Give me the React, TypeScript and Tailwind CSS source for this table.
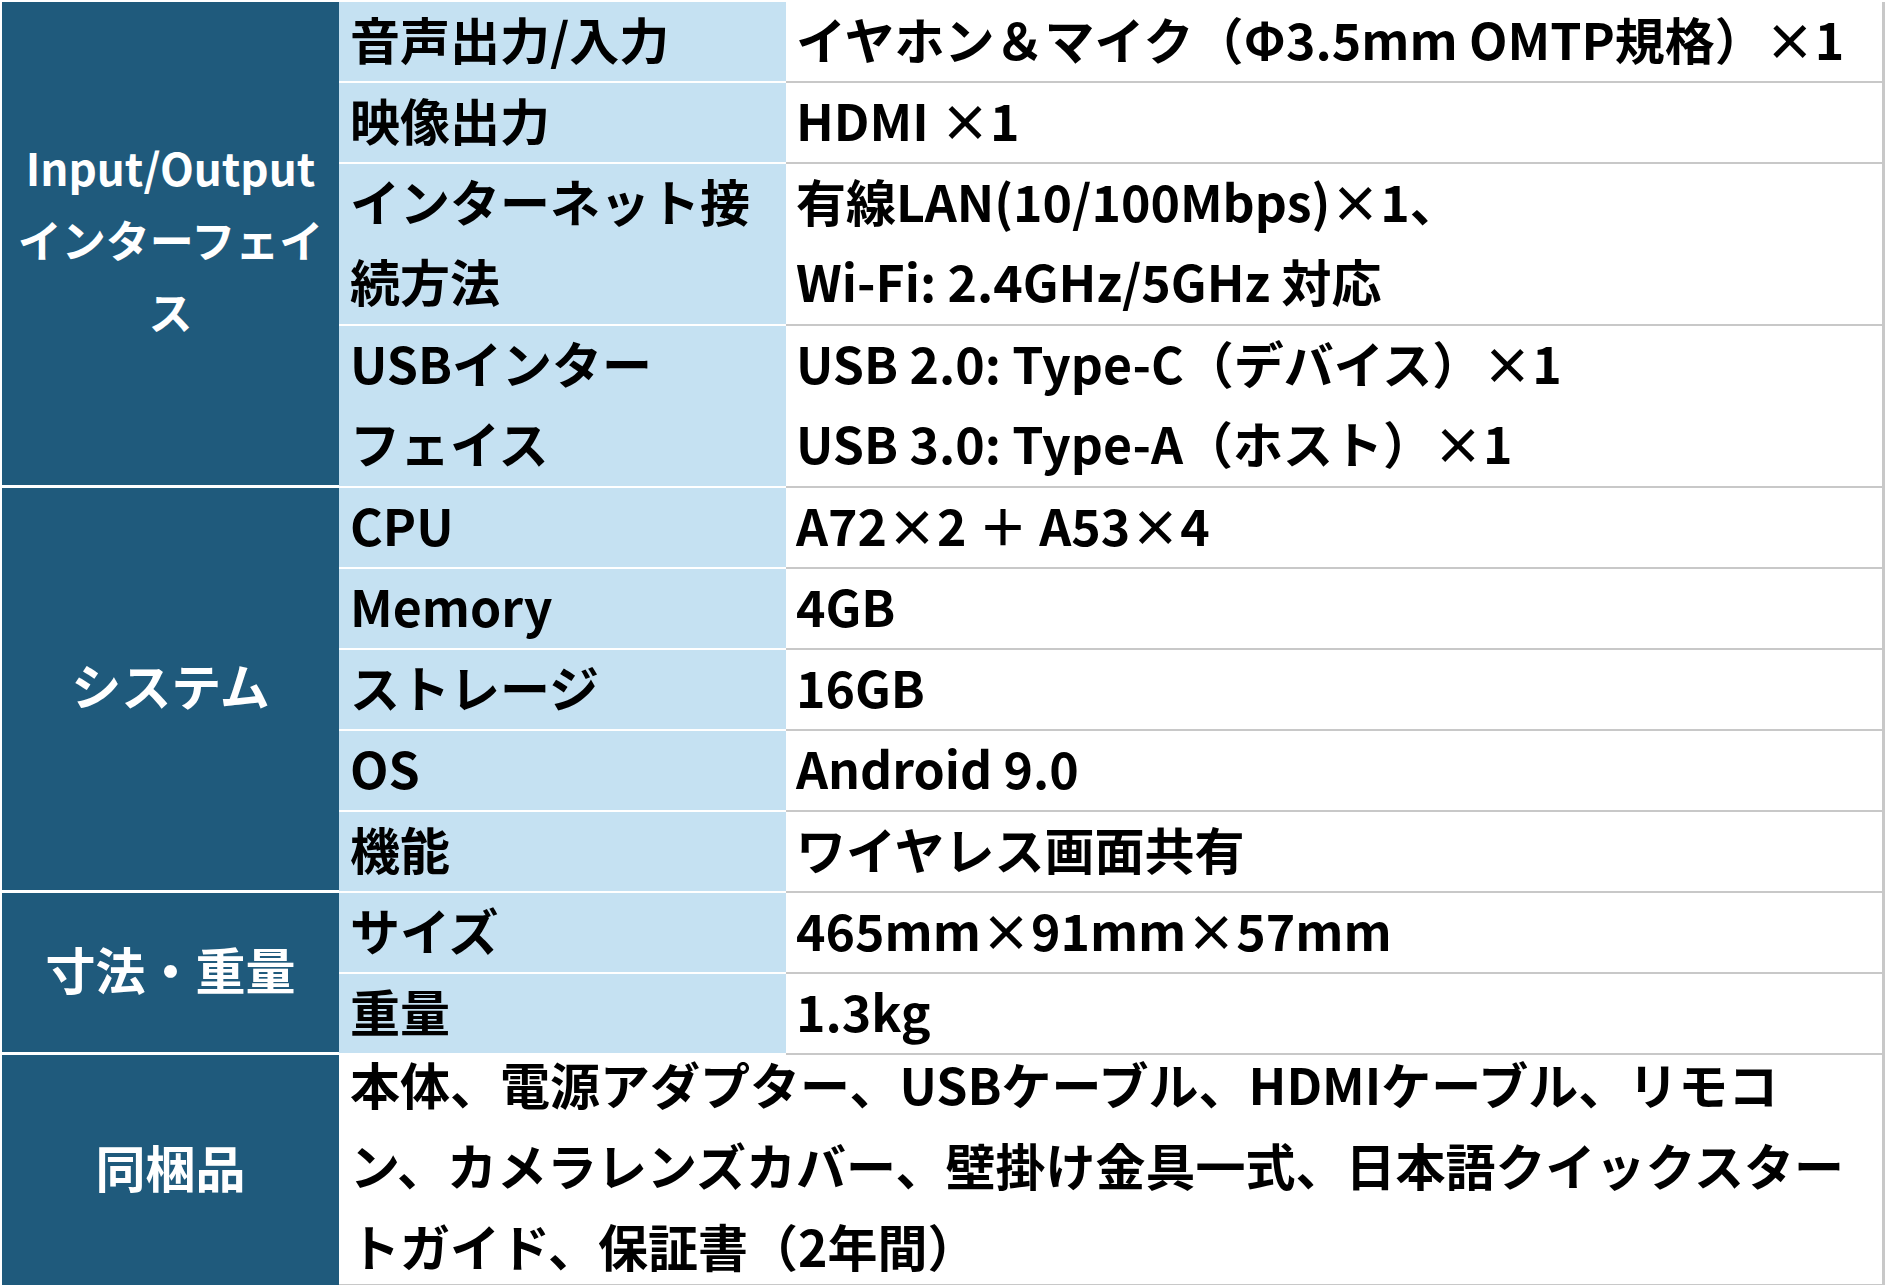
import React from "react";

type Item = {
  label: React.ReactNode;
  value: React.ReactNode;
  tall?: boolean;
};

type Group = {
  title: React.ReactNode;
  small?: boolean;
  items: Item[];
};

const groups: Group[] = [
  {
    title: (
      <>
        Input/Output
        <br />
        インターフェイス
      </>
    ),
    small: true,
    items: [
      { label: "音声出力/入力", value: "イヤホン＆マイク（Φ3.5mm OMTP規格）×1" },
      { label: "映像出力", value: "HDMI ×1" },
      {
        label: (
          <>
            インターネット接
            <br />
            続方法
          </>
        ),
        value: (
          <>
            有線LAN(10/100Mbps)×1、
            <br />
            Wi-Fi: 2.4GHz/5GHz 対応
          </>
        ),
        tall: true,
      },
      {
        label: (
          <>
            USBインター
            <br />
            フェイス
          </>
        ),
        value: (
          <>
            USB 2.0: Type-C（デバイス）×1
            <br />
            USB 3.0: Type-A（ホスト）×1
          </>
        ),
        tall: true,
      },
    ],
  },
  {
    title: "システム",
    items: [
      { label: "CPU", value: "A72×2 ＋ A53×4" },
      { label: "Memory", value: "4GB" },
      { label: "ストレージ", value: "16GB" },
      { label: "OS", value: "Android 9.0" },
      { label: "機能", value: "ワイヤレス画面共有" },
    ],
  },
  {
    title: "寸法・重量",
    items: [
      { label: "サイズ", value: "465mm×91mm×57mm" },
      { label: "重量", value: "1.3kg" },
    ],
  },
];

function SpecRow({ item }: { item: Item }) {
  return (
    <div className={`flex ${item.tall ? "h-[162px]" : "h-[81px]"}`}>
      <div className="w-[447px] shrink-0 bg-[#c5e1f2] border-b-2 border-white pl-[11px] text-black">
        <div className="-mt-[4px] leading-[80px]">{item.label}</div>
      </div>
      <div className="flex-1 bg-white border-b-2 border-r-[3px] border-[#c8c8c8] pl-[10px] text-black whitespace-nowrap">
        <div className="-mt-[4px] leading-[80px]">{item.value}</div>
      </div>
    </div>
  );
}

export default function App() {
  return (
    <div className="w-[1885px] h-[1285px] bg-white pl-[2px] pt-[2px] overflow-hidden font-['Noto_Sans_CJK_JP','Noto_Sans',sans-serif] font-bold text-[50px]">
      {groups.map((group, i) => (
        <div key={i} className="flex">
          <div className="w-[337px] shrink-0 bg-[#1f5a7c] border-b-[3px] border-white flex items-center justify-center text-center text-white">
            {group.small ? (
              <div className="text-[44px] leading-[72px] px-[6px] mb-[10px]">{group.title}</div>
            ) : (
              <div className="leading-[80px] mb-[10px]">{group.title}</div>
            )}
          </div>
          <div className="flex-1 flex flex-col">
            {group.items.map((item, j) => (
              <SpecRow key={j} item={item} />
            ))}
          </div>
        </div>
      ))}

      {/* 同梱品 */}
      <div className="flex h-[231px]">
        <div className="w-[337px] shrink-0 bg-[#1f5a7c] flex items-center justify-center text-white">
          <div className="leading-[80px] mb-[10px]">同梱品</div>
        </div>
        <div className="flex-1 bg-white border-b-2 border-r-[3px] border-[#c8c8c8] pl-[11px] text-black">
          <div className="-mt-[12px] leading-[81px] whitespace-nowrap">
            本体、電源アダプター、USBケーブル、HDMIケーブル、リモコ
            <br />
            ン、カメラレンズカバー、壁掛け金具一式、日本語クイックスター
            <br />
            トガイド、保証書（2年間）
          </div>
        </div>
      </div>
    </div>
  );
}
